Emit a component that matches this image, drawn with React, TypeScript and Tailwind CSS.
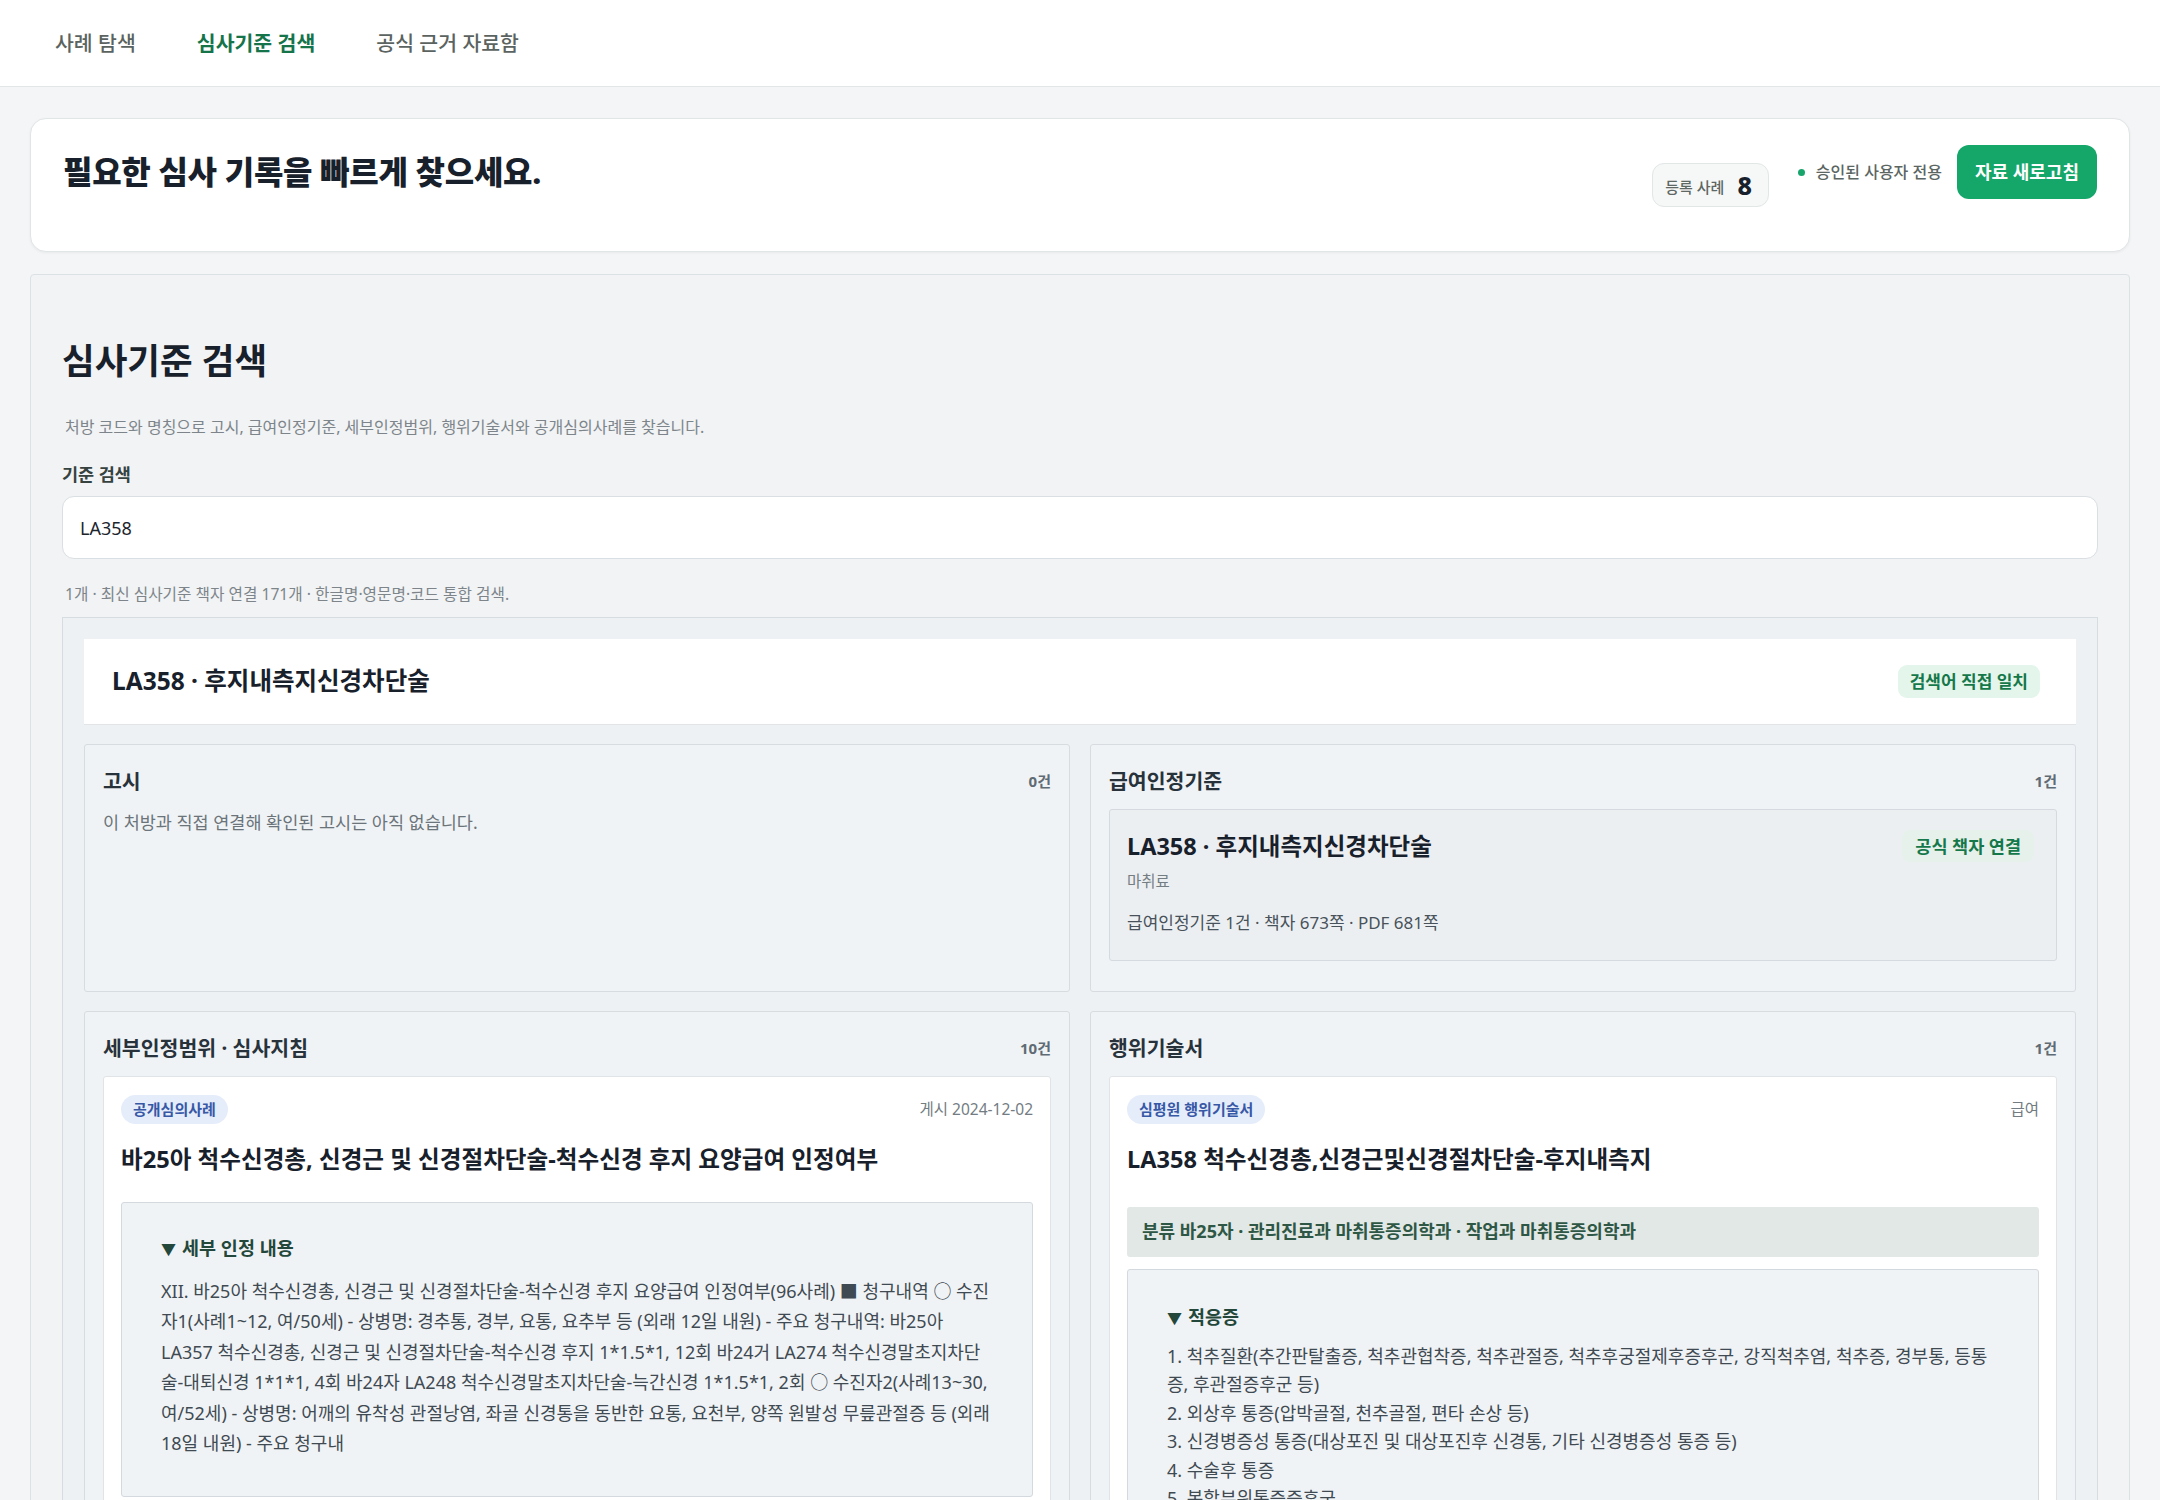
import React from 'react';

const tabs = [
  { label: '사례 탐색', active: false },
  { label: '심사기준 검색', active: true },
  { label: '공식 근거 자료함', active: false },
];

const detailText =
  'XII. 바25아 척수신경총, 신경근 및 신경절차단술-척수신경 후지 요양급여 인정여부(96사례) ■ 청구내역 ○ 수진자1(사례1~12, 여/50세) - 상병명: 경추통, 경부, 요통, 요추부 등 (외래 12일 내원) - 주요 청구내역: 바25아 LA357 척수신경총, 신경근 및 신경절차단술-척수신경 후지 1*1.5*1, 12회 바24거 LA274 척수신경말초지차단술-대퇴신경 1*1*1, 4회 바24자 LA248 척수신경말초지차단술-늑간신경 1*1.5*1, 2회 ○ 수진자2(사례13~30, 여/52세) - 상병명: 어깨의 유착성 관절낭염, 좌골 신경통을 동반한 요통, 요천부, 양쪽 원발성 무릎관절증 등 (외래 18일 내원) - 주요 청구내';

const indications = [
  '1. 척추질환(추간판탈출증, 척추관협착증, 척추관절증, 척추후궁절제후증후군, 강직척추염, 척추증, 경부통, 등통증, 후관절증후군 등)',
  '2. 외상후 통증(압박골절, 천추골절, 편타 손상 등)',
  '3. 신경병증성 통증(대상포진 및 대상포진후 신경통, 기타 신경병증성 통증 등)',
  '4. 수술후 통증',
  '5. 복합부위통증증후군',
];

// Section card used for the four result groups
function GroupCard({
  title,
  count,
  children,
}: {
  title: string;
  count: string;
  children: React.ReactNode;
}) {
  return (
    <div className="min-h-[248px] rounded-[3px] border border-[#d6dce0] bg-[#f0f3f5] px-[18px] pt-[22px] pb-[30px]">
      <div className="flex items-center justify-between">
        <h3 className="text-[20.5px] leading-[28px] font-bold text-[#27323b]">{title}</h3>
        <span className="text-[15px] font-bold text-[#5f6b74]">{count}</span>
      </div>
      {children}
    </div>
  );
}

function DetailBox({
  summary,
  children,
  className,
}: {
  summary: string;
  children: React.ReactNode;
  className?: string;
}) {
  return (
    <details open className={`rounded-[3px] border border-[#d3d9de] bg-[#f0f3f5] px-[39px] pb-[37px] ${className ?? ''}`}>
      <summary className="list-none cursor-pointer text-[18.5px] leading-[24px] font-bold text-[#23473a]">
        <span className="mr-[6px] text-[15px]">▼</span>
        {summary}
      </summary>
      {children}
    </details>
  );
}

export default function App() {
  return (
    <div className="min-h-screen bg-[#f3f5f6] font-['Noto_Sans','Noto_Sans_CJK_KR',sans-serif] text-[#1c252d]">
      {/* top navigation */}
      <nav className="flex h-[87px] items-center gap-[61px] border-b border-[#e2e6e7] bg-white pl-[55px]">
        {tabs.map((t) => (
          <a
            key={t.label}
            href="#"
            className={
              t.active
                ? 'text-[20.5px] font-bold text-[#16744a]'
                : 'text-[20.5px] font-medium text-[#5b6360]'
            }
          >
            {t.label}
          </a>
        ))}
      </nav>

      <main className="px-[30px] pt-[31px] pb-[40px]">
        {/* hero */}
        <section className="flex items-center justify-between rounded-[16px] border border-[#e0e5e6] bg-white px-[32px] pt-[26px] pb-[52px] shadow-[0_1px_3px_rgba(0,0,0,0.05)]">
          <h1 className="text-[32px] font-extrabold tracking-[-0.3px] text-[#18212b]">
            필요한 심사 기록을 빠르게 찾으세요.
          </h1>
          <div className="flex items-center">
            <div className="mt-[13px] -mb-[13px] flex h-[44px] items-center gap-[13px] rounded-[12px] border border-[#e1e6e6] bg-[#f6f8f8] pr-[16px] pl-[12px]">
              <span className="pt-[4px] text-[15px] font-medium text-[#5e6764]">등록 사례</span>
              <span className="text-[25px] leading-none font-extrabold text-[#18212b]">8</span>
            </div>
            <span className="ml-[29px] h-[7px] w-[7px] rounded-full bg-[#17a56b]" />
            <span className="ml-[11px] text-[16px] font-medium text-[#5b6663]">승인된 사용자 전용</span>
            <button className="ml-[15px] h-[54px] rounded-[12px] bg-[#15a66a] px-[18px] text-[18px] font-bold text-white">
              자료 새로고침
            </button>
          </div>
        </section>

        {/* search section */}
        <section className="mt-[22px] rounded-[4px] border border-[#dce1e4] bg-[#f1f3f5] px-[31px] pt-[65px] pb-[40px]">
          <h2 className="text-[35.5px] leading-[41px] font-bold text-[#18212b]">심사기준 검색</h2>
          <p className="mt-[35px] pl-[3px] text-[16px] leading-[22px] text-[#7d858a]">
            처방 코드와 명칭으로 고시, 급여인정기준, 세부인정범위, 행위기술서와 공개심의사례를 찾습니다.
          </p>
          <label className="mt-[24px] block text-[17.5px] leading-[24px] font-bold text-[#36423f]">기준 검색</label>
          <input
            defaultValue="LA358"
            className="mt-[10px] block h-[63px] w-full rounded-[12px] border border-[#d9dfe2] bg-white px-[17px] text-[18px] text-[#1c252d] outline-none"
          />
          <p className="mt-[25px] pl-[3px] text-[15.7px] leading-[20px] text-[#7d858a]">
            1개 · 최신 심사기준 책자 연결 171개 · 한글명·영문명·코드 통합 검색.
          </p>

          {/* results */}
          <div className="mt-[13px] border border-[#d6dce0] bg-[#eef1f3] p-[21px]">
            <div className="flex h-[86px] items-center justify-between border-b border-[#e1e5e8] bg-white pr-[36px] pl-[28px]">
              <h3 className="text-[24.5px] font-bold text-[#18212b]">LA358 · 후지내측지신경차단술</h3>
              <span className="rounded-[9px] bg-[#e4f5ec] px-[12px] py-[4px] text-[17px] font-bold text-[#15784a]">
                검색어 직접 일치
              </span>
            </div>

            <div className="mt-[19px] grid grid-cols-2 gap-x-[20px] gap-y-[19px]">
              <GroupCard title="고시" count="0건">
                <p className="mt-[15px] text-[17.5px] leading-[24px] text-[#6b747a]">
                  이 처방과 직접 연결해 확인된 고시는 아직 없습니다.
                </p>
              </GroupCard>

              <GroupCard title="급여인정기준" count="1건">
                <div className="mt-[14px] rounded-[3px] border border-[#d4dadf] bg-[#eceff2] pt-[21px] pr-[22px] pb-[25px] pl-[17px]">
                  <div className="flex h-[30px] items-center justify-between">
                    <h4 className="text-[23.5px] leading-[30px] font-bold text-[#18212b]">
                      LA358 · 후지내측지신경차단술
                    </h4>
                    <span className="rounded-[8px] bg-[#e6f1ec] px-[13px] py-[3px] text-[17.5px] font-bold text-[#15784a]">
                      공식 책자 연결
                    </span>
                  </div>
                  <p className="mt-[9px] text-[15.5px] leading-[22px] text-[#747d82]">마취료</p>
                  <p className="mt-[19px] text-[17px] leading-[24px] text-[#48525a]">
                    급여인정기준 1건 · 책자 673쪽 · PDF 681쪽
                  </p>
                </div>
              </GroupCard>

              <GroupCard title="세부인정범위 · 심사지침" count="10건">
                <div className="mt-[14px] rounded-[3px] border border-[#e0e4e7] bg-white px-[17px] pt-[18px] pb-[20px]">
                  <div className="flex items-center justify-between">
                    <span className="rounded-full bg-[#e5edfb] px-[12px] py-[3px] text-[15px] font-bold text-[#3858a6]">
                      공개심의사례
                    </span>
                    <span className="text-[15.5px] text-[#737c82]">게시 2024-12-02</span>
                  </div>
                  <h4 className="mt-[20px] text-[23.6px] leading-[30px] font-bold text-[#18212b]">
                    바25아 척수신경총, 신경근 및 신경절차단술-척수신경 후지 요양급여 인정여부
                  </h4>
                  <DetailBox summary="세부 인정 내용" className="mt-[28px] pt-[33px]">
                    <p className="mt-[15px] text-[18px] leading-[30.5px] text-[#3f4a52]">{detailText}</p>
                  </DetailBox>
                </div>
              </GroupCard>

              <GroupCard title="행위기술서" count="1건">
                <div className="mt-[14px] rounded-[3px] border border-[#e0e4e7] bg-white px-[17px] pt-[18px] pb-[20px]">
                  <div className="flex items-center justify-between">
                    <span className="rounded-full bg-[#e5edfb] px-[12px] py-[3px] text-[15px] font-bold text-[#3858a6]">
                      심평원 행위기술서
                    </span>
                    <span className="text-[15.5px] text-[#737c82]">급여</span>
                  </div>
                  <h4 className="mt-[20px] text-[23.6px] leading-[30px] font-bold text-[#18212b]">
                    LA358 척수신경총,신경근및신경절차단술-후지내측지
                  </h4>
                  <div className="mt-[33px] flex h-[50px] items-center rounded-[3px] bg-[#e2e8e5] px-[15px] text-[18px] font-bold text-[#2f5745]">
                    분류 바25자 · 관리진료과 마취통증의학과 · 작업과 마취통증의학과
                  </div>
                  <DetailBox summary="적응증" className="mt-[12px] pt-[35px]">
                    <ul className="mt-[12px] text-[18px] leading-[28.5px] text-[#3f4a52]">
                      {indications.map((line) => (
                        <li key={line}>{line}</li>
                      ))}
                    </ul>
                  </DetailBox>
                </div>
              </GroupCard>
            </div>
          </div>
        </section>
      </main>
    </div>
  );
}
